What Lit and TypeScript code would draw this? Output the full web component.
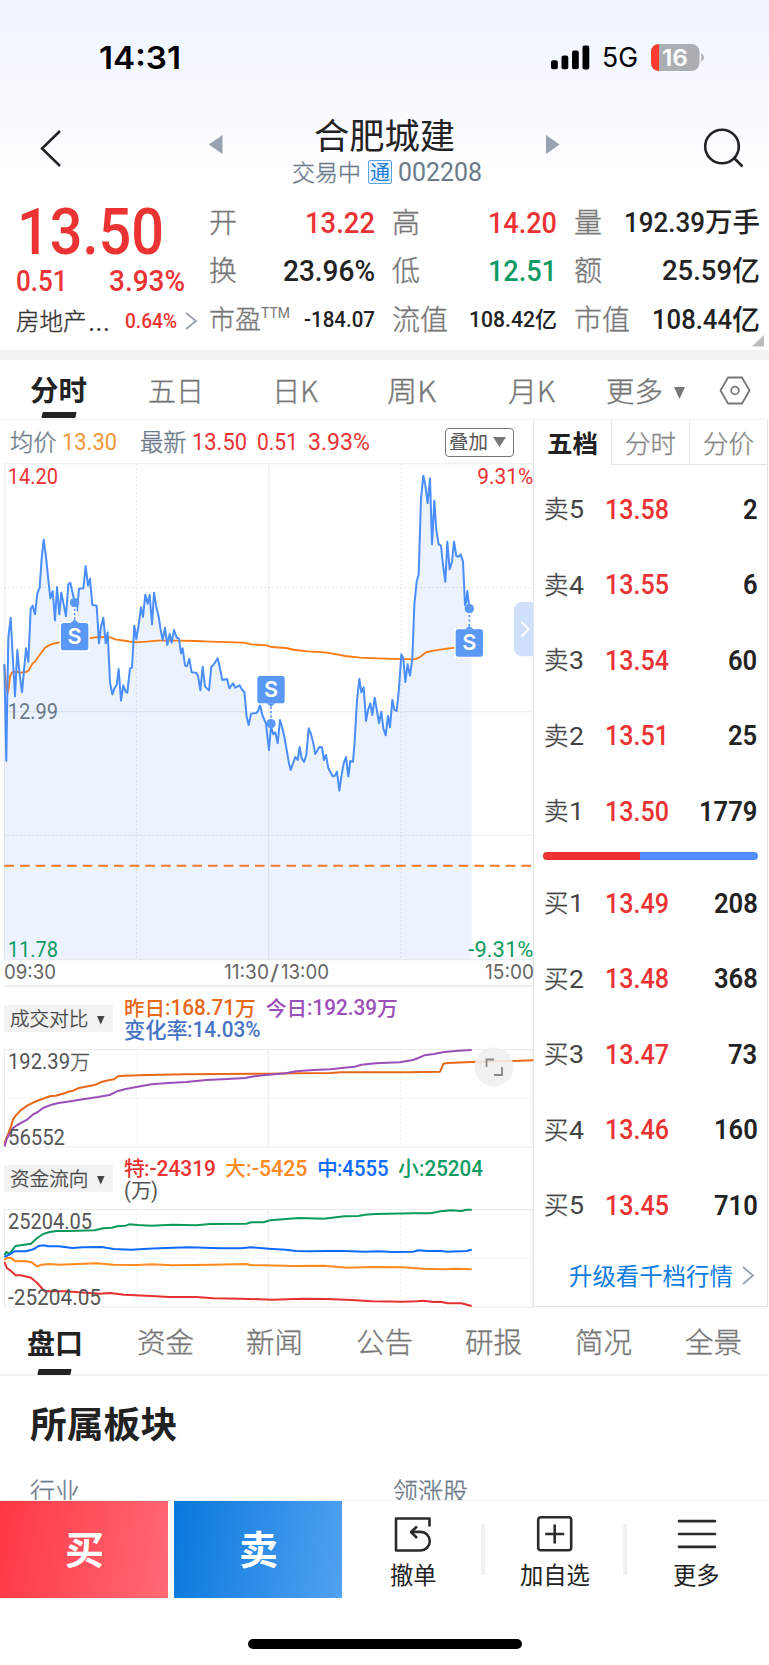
import { LitElement, html, svg, css } from "lit";
import { customElement } from "lit/decorators.js";

const ADV: Record<string, number> = { ".": 0.263, ":": 0.255, "%": 0.72, "-": 0.4, "(": 0.34, ")": 0.34 };
const HAN = /[\u4e00-\u9fff]/;

/** One run of text fitted to an exact width, centred vertically on its glyphs. */
function t(s: string, fs: number, w?: number, cls = "") {
  const han = HAN.test(s);
  const width =
    w ?? (han ? s.length * fs : [...s].reduce((a, c) => a + (ADV[c] ?? 0.5617) * fs * 0.9, 0));
  const y = fs / 2 + (han ? 0.38 : 0.3555) * fs;
  return html`<svg class="t ${cls}" width=${width.toFixed(1)} height=${fs}>
    <text x="0" y=${y} font-size=${fs} class=${han ? "han" : "num"} textLength=${width.toFixed(1)} lengthAdjust="spacingAndGlyphs">${s}</text>
  </svg>`;
}

const arrowRight = (w: number, h: number, cls = "chev") =>
  html`<svg class=${cls} width=${w} height=${h} viewBox="0 0 ${w} ${h}"><path d="M1 1L${w - 1} ${h / 2}L1 ${h - 1}" fill="none" stroke="#9aa5b1" stroke-width="1.9"/></svg>`;

const PRICE =
  "13,628 19,917 22,715 25,548 32,488 38,600 45,724 52,585 58,650 66,712 78,580 85,620 92,462 98,452 105,478 112,415 119,398 125,310 131,254 138,305 145,375 151,430 158,408 165,496 171,396 178,478 184,413 198,484 205,388 211,383 217,410 224,440 227,455 231,468 237,401 250,400 257,333 264,392 270,371 277,450 290,452 297,565 303,515 310,488 317,565 323,532 330,682 337,718 343,700 350,690 356,642 363,737 370,691 377,710 382,713 390,640 396,638 403,512 409,552 416,510 423,457 429,486 436,419 443,446 449,420 456,508 462,413 469,455 476,485 482,525 488,555 495,518 502,570 509,537 515,563 522,525 530,548 537,551 543,595 548,580 555,632 561,634 568,611 575,652 588,653 594,662 601,706 608,635 615,694 627,706 634,635 640,630 653,610 660,640 667,675 681,672 688,700 699,685 706,698 719,691 726,704 733,710 740,785 746,810 753,776 769,774 774,768 780,750 787,780 798,806 800,825 807,885 813,815 820,838 826,832 833,865 840,795 846,815 853,845 860,885 867,925 872,945 879,925 886,906 893,915 899,876 905,910 912,921 919,900 926,820 932,835 939,860 946,897 958,876 966,877 972,915 978,900 985,940 998,964 1005,962 1011,950 1018,1007 1024,965 1031,925 1038,906 1045,964 1051,918 1059,920 1064,860 1071,735 1078,672 1084,712 1091,697 1098,798 1104,765 1111,745 1117,780 1124,728 1131,768 1137,804 1144,770 1150,820 1157,841 1164,782 1170,817 1177,734 1183,764 1190,768 1197,700 1204,598 1210,610 1216,681 1223,628 1230,662 1237,610 1243,450 1250,380 1256,358 1263,130 1270,62 1276,90 1283,145 1290,70 1296,268 1303,137 1309,225 1316,268 1323,272 1329,330 1336,380 1342,260 1349,343 1356,320 1362,260 1369,303 1376,305 1382,298 1389,320 1395,450 1399,440 1402,408 1408,460";
const AVG =
  "13,628 19,700 23,713 26,700 30,665 36,652 48,650 60,653 78,651 86,646 98,625 105,620 115,605 135,578 145,572 160,566 185,561 220,555 260,551 280,548 296,546 332,547 345,553 380,558 402,562 440,560 470,557 530,557 590,558 630,560 730,563 755,568 800,571 815,576 858,579 885,585 925,589 975,592 1015,599 1035,603 1080,608 1150,611 1240,613 1250,611 1260,606 1278,592 1300,587 1340,581 1370,578 1408,576";

const VOL = [
  ["#e8681a", "13,295 20,275 33,240 38,222 46,210 60,195 80,180 100,170 130,158 148,152 162,151 190,143 198,139 212,136 230,128 245,125 270,120 282,116 297,109 318,104 332,102 342,93 360,91 430,89 540,87 780,85 850,84 960,83 990,81 1190,81 1278,79 1288,55 1300,53 1370,50 1390,49 1490,47 1549,45"],
  ["#9b4fb8", "13,303 20,280 36,250 50,239 80,222 95,208 110,200 125,188 150,178 170,173 210,167 240,162 285,155 318,149 340,138 365,131 400,124 440,117 490,113 540,110 600,104 660,101 712,98 730,94 780,88 830,84 860,78 910,74 960,72 1000,67 1030,64 1050,58 1090,54 1160,51 1200,44 1215,38 1232,30 1260,26 1290,20 1330,16 1370,14"],
];
const FUND = [
  ["#0b9a5b", "13,630 18,620 28,625 45,602 60,600 90,595 108,578 125,566 145,560 165,557 200,557 275,555 300,549 325,547 340,543 365,541 375,537 400,539 440,541 500,538 570,540 610,536 715,535 730,531 765,531 785,525 840,520 870,518 940,520 1000,513 1040,512 1060,508 1090,506 1200,504 1250,504 1280,498 1310,495 1340,497 1355,493 1370,493"],
  ["#0f6bff", "13,635 30,626 42,618 75,618 97,612 110,603 125,600 140,603 170,603 210,608 240,606 295,605 330,611 380,613 430,610 480,608 550,606 640,609 700,609 730,606 780,610 830,613 860,617 900,618 950,617 1000,617 1060,619 1100,618 1140,620 1200,619 1215,615 1240,617 1280,617 1300,619 1355,617 1370,613"],
  ["#ff8a1f", "13,645 20,638 30,637 45,648 70,647 92,651 108,663 120,658 145,656 170,658 210,657 280,654 330,658 400,659 440,657 500,660 620,658 715,656 730,660 770,660 850,662 940,661 1010,667 1080,665 1170,666 1230,670 1290,672 1320,670 1370,672"],
  ["#e83030", "13,650 20,668 30,675 45,690 60,690 90,697 108,713 130,738 190,738 250,742 290,745 320,743 360,748 440,752 490,755 570,755 620,759 700,760 790,763 880,760 950,761 1020,764 1080,768 1170,769 1210,768 1230,766 1260,770 1280,769 1300,774 1340,774 1370,782"],
];

function marker(x: number, y: number, dotY: number) {
  const down = dotY > y;
  const e = down ? y + 41 : y - 41;
  const tip = down ? e + 10 : e - 10;
  return svg`
    <line x1=${x} x2=${x} y1=${tip} y2=${dotY} stroke="#fff" stroke-width="12"/>
    <line x1=${x} x2=${x} y1=${tip} y2=${dotY} stroke="#5a98f6" stroke-width="5" stroke-dasharray="7 6"/>
    <circle cx=${x} cy=${dotY} r="14" fill="#5a98f6"/>
    <path d="M${x - 41} ${y - 41}h82v82h-82z" fill="#5a98f6" stroke="#fff" stroke-width="8" stroke-linejoin="round"/>
    <path d="M${x - 12} ${e}L${x} ${tip}L${x + 12} ${e}z" fill="#5a98f6" stroke="#5a98f6"/>
    <rect x=${x - 41} y=${y - 41} width="82" height="82" rx="8" fill="#5a98f6"/>
    <text x=${x} y=${y + 21} text-anchor="middle" font-size="65" class="badge">S</text>`;
}

function miniChart(lines: string[][], top: number, height: number) {
  return html`<svg class="lines" width="533" height=${height} viewBox="0 ${top} 1548 ${height * 3}" preserveAspectRatio="none">
    <g stroke="#ebebeb" stroke-width="1" fill="none">
      <rect vector-effect="non-scaling-stroke" x="13" y=${top + 2} width="1535" height="292"/>
      <path vector-effect="non-scaling-stroke" d="M779 ${top + 2}V${top + 294}"/>
      <path vector-effect="non-scaling-stroke" stroke-dasharray="2 2" d="M396 ${top + 2}V${top + 294}M1164 ${top + 2}V${top + 294}M13 ${top + 148}H1548"/>
    </g>
    ${lines.map(([c, p]) => svg`<polyline vector-effect="non-scaling-stroke" points=${p} fill="none" stroke=${c} stroke-width="2" stroke-linejoin="round"/>`)}
  </svg>`;
}

@customElement("app-root")
export class AppRoot extends LitElement {
  static styles = css`
    :host { display: flex; flex-direction: column; position: relative; width: 769px; height: 1665px; overflow: hidden;
      background: #fff linear-gradient(#eff4ff, #fff 190px) no-repeat; background-size: 100% 190px;
      font-family: "Noto Sans CJK SC", "Noto Sans", sans-serif; color: #222; box-sizing: border-box; }
    * { box-sizing: border-box; }
    svg { display: block; flex: none; overflow: visible; }
    text { fill: currentColor; }
    .num { font-family: Roboto, "Liberation Sans", sans-serif; }
    .han { font-family: "Noto Sans CJK SC", sans-serif; }
    .light .han { font-weight: 300; stroke: currentColor; stroke-width: 0.35px; }
    .m text { font-weight: 500; }
    .b text { font-weight: 700; }
    .ios text { font-family: Inter, "Liberation Sans", sans-serif; }
    .sb text { font-weight: 600; }
    .badge { font-family: Inter, "Liberation Sans", sans-serif; font-weight: 600; fill: #fff; }
    .row { display: flex; align-items: center; }
    .red { color: #eb3333; } .green { color: #0f9b63; } .gray { color: #777; } .slate { color: #6b7a8a; }
    .dark { color: #222; } .mid { color: #555; } .amber { color: #f0983a; }

    .status { height: 115px; padding-left: 99px; flex: none; }
    .bars { margin-left: 370px; }
    .g5 { margin-left: 12px; color: #000; }
    .battery { margin-left: 13px; margin-bottom: 1px; }
    .clock { color: #000; }

    .nav { height: 75px; flex: none; display: grid; grid-template-columns: 208px 15px 322px 15px 209px; }
    .back { padding: 14px 0 0 40px; }
    .tri { padding-top: 20px; }
    .find { padding: 13px 0 0 144px; }
    .title { display: flex; flex-direction: column; align-items: center; padding-top: 3px; gap: 7px; }
    .sub { height: 24px; padding-left: 5px; }
    .tag { width: 24px; height: 24px; border: 1px solid #5ea5e6; border-radius: 2px; margin: 0 6px 0 7px; background: #eaf4ff; color: #1f7fd6; display: grid; place-items: center; }

    .quote { position: relative; height: 160px; flex: none; display: flex; padding: 8px 0 0 16px; }
    .last { width: 193px; }
    .big { height: 65px; padding-left: 1px; }
    .chg { height: 34px; width: 169px; justify-content: space-between; }
    .ind { height: 48px; }
    .ind .red { margin-left: 15px; }
    .ind .chev { margin-left: 8px; }
    .dots { margin-left: 1px; color: #333; }
    .ink { color: #333; }
    .stats { display: grid; grid-template-columns: 166px 165px 186px; column-gap: 17px; grid-auto-rows: 48.3px; height: 145px; }
    .stat { display: flex; align-items: center; justify-content: space-between; }
    .stats .gray { margin-left: -0.5px; }
    .ttm { display: flex; align-items: flex-start; }
    .corner { position: absolute; left: 752px; top: 145px; }

    .gap { height: 10px; background: #f2f2f2; flex: none; }
    .tabs { height: 60px; flex: none; padding-left: 30px; display: grid; grid-template-columns: 118px 124px 115px 121px 98px 113px auto; align-items: center; border-bottom: 1px solid #eee; padding-top: 2px; }
    .tab { position: relative; color: #777; }
    .tab.on { color: #222; }
    .bar { position: absolute; left: 12px; top: 36px; width: 34px; height: 6px; background: #222; border-radius: 1px; transform: skewX(-12deg); }

    .main { height: 887px; flex: none; display: flex; }
    .left { width: 533px; flex: none; }
    .info { height: 43px; padding: 1px 0 0 10px; }
    .g1 { margin-left: 5.5px; } .g2 { margin-left: 23px; } .g3 { margin-left: 10px; }
    .overlay { margin-left: 75px; width: 69px; height: 29px; border: 1.5px solid #777; border-radius: 4px; padding-left: 3px; gap: 5px; color: #555; }
    .axis { height: 27px; border-bottom: 2px solid #efefef; margin-left: 4px; display: grid; grid-template-columns: 219.5px 46.5px 10.5px 204px auto; align-items: center; color: #666; padding-bottom: 1px; }
    .head { height: 62px; padding-left: 4px; display: flex; align-items: flex-start; }
    .chip { width: 109px; height: 27px; margin-top: 18px; background: #f2f2f2; padding: 1px 0 0 6px; gap: 9px; color: #444; }
    .chip .c, .c { padding-top: 2px; }
    .legend { margin: 10px 0 0 10.5px; }
    .legend .row { height: 22px; }
    .orange { color: #e8681a; } .purple { color: #9b4fb8; } .steel { color: #4674c4; } .org { color: #ff8a1f; } .blue { color: #0f6bff; }
    .s1 { margin-left: 11px; } .s2 { margin-left: 9px; }
    .dn { margin: 4px 0 0 11px; }
    .mini { position: relative; height: 98px; color: #555; }
    .hi { position: absolute; left: 7.5px; top: 2px; }
    .lo { position: absolute; left: 7.5px; bottom: -1px; }
    .expand { position: absolute; left: 474px; top: -2px; }

    .right { width: 235px; border: 1px solid #e4e4e4; border-top: 0; flex: none; }
    .ptabs { display: grid; grid-template-columns: 77px 78px 78px; height: 44.5px; }
    .pt { display: grid; place-items: center; color: #888; border-left: 1px solid #e4e4e4; border-bottom: 1px solid #e4e4e4; padding: 4px 1px 0 0; }
    .pt.on { border-color: transparent; color: #222; }
    .side { padding: 6px 9.5px 0 10px; }
    .lower { padding-top: 0; }
    .lvl { height: 75.6px; display: grid; grid-template-columns: 60.5px 80px 1fr; align-items: center; }
    .name { display: flex; align-items: center; color: #444; }
    .qty { justify-self: end; }
    .ratio { display: grid; grid-template-columns: 97px 118px; height: 8px; margin: 4px 0 4px 9px; border-radius: 4px; overflow: hidden; width: 215px; }
    .sell { background: #eb3333; } .buy { background: #4f8dff; }
    .more { height: 64px; padding: 2px 0 0 34.5px; gap: 10px; color: #0b7be0; }

    .btabs { height: 69px; flex: none; padding: 4px 0 0 27px; display: grid; grid-template-columns: repeat(7, 109.6px); align-items: center; border-bottom: 2px solid #f2f2f2; }
    .btabs .bar { left: 11px; top: 40px; width: 33px; }
    .sector { height: 124px; flex: none; overflow: hidden; padding: 30px 0 0 30px; }
    .heads { display: grid; grid-template-columns: 363px auto; margin-top: 36px; }

    .actions { height: 98px; flex: none; display: flex; border-top: 1px solid #f0f0f0; }
    .btn { width: 168px; height: 97px; display: grid; place-items: center; color: #fff; padding-left: 1px; }
    .b-buy { background: linear-gradient(100deg, #ff3744, #ff6a75); margin-right: 6px; }
    .b-sell { background: linear-gradient(100deg, #0877dd, #51a2f1); padding-left: 0; }
    .act { display: flex; flex-direction: column; align-items: center; padding-top: 14px; gap: 11px; }
    .sep { width: 4px; height: 51px; margin-top: 23px; background: #f1f1f1; }
    .a1 { width: 139px; padding-left: 3px; } .a2 { width: 137.5px; padding-left: 3px; } .a3 { width: 140px; }
    .home { width: 274px; height: 10px; border-radius: 5px; background: #000; margin: 41px 0 0 247.5px; }
  `;

  private stat(label: unknown, value: unknown) {
    return html`<div class="stat">${label}<div class="row">${value}</div></div>`;
  }

  private level(n: string, i: string, price: string, qty: string) {
    return html`<div class="lvl">
      <div class="name">${t(n, 24.5, undefined, "light")}${t(i, 26.5, 15)}</div>
      ${t(price, 27.5, 64, "m red")}
      ${t(qty, 27.5, qty.length * 14.6, "sb dark qty")}
    </div>`;
  }

  render() {
    const caret = (w: number, h: number, c = "#777") =>
      html`<svg width=${w} height=${h} viewBox="0 0 ${w} ${h}"><path d="M0 0H${w}L${w / 2} ${h}z" fill=${c}/></svg>`;
    return html`
      <div class="status row">
        ${t("14:31", 31.5, 82, "ios sb clock")}
        <svg class="bars" width="39" height="25" viewBox="0 0 39 25"><rect y="15.3" width="6.8" height="9" rx="2"/><rect x="10.5" y="10.6" width="6.8" height="13.7" rx="2"/><rect x="21" y="5.6" width="6.8" height="18.7" rx="2"/><rect x="31.5" y="0.4" width="6.8" height="24" rx="2"/></svg>
        ${t("5G", 27, 36, "ios g5")}
        <svg class="battery" width="53" height="27" viewBox="0 0 53 27">
          <rect width="48.5" height="27" rx="8" fill="#abaeb3"/><path d="M8 0a8 8 0 0 0-8 8v11a8 8 0 0 0 8 8z" fill="#ff3b30"/>
          <path d="M50.3 9q2.6 1.8 2.6 4.5t-2.6 4.5z" fill="#abaeb3"/>
          <text x="24" y="21.8" font-size="22.5" text-anchor="middle" class="badge" textLength="26" lengthAdjust="spacingAndGlyphs">16</text>
        </svg>
      </div>
      <div class="nav">
        <div class="back"><svg width="22" height="38" viewBox="0 0 22 38"><path d="M20 2L2 19.5L20 37" fill="none" stroke="#222" stroke-width="2.5"/></svg></div>
        <div class="tri"><svg width="15" height="19"><path d="M14.5 0V19L.8 9.5z" fill="#98a3af"/></svg></div>
        <div class="title">
          ${t("合肥城建", 35, 141)}
          <div class="sub row slate">${t("交易中", 23, undefined, "light")}<span class="tag">${t("通", 20)}</span>${t("002208", 26, 84)}</div>
        </div>
        <div class="tri"><svg width="15" height="19"><path d="M1 0V19L14.5 9.5z" fill="#98a3af"/></svg></div>
        <div class="find"><svg width="42" height="42" viewBox="0 0 42 42"><g fill="none" stroke="#222" stroke-width="2.6"><circle cx="18" cy="18.5" r="16.8"/><path d="M30.5 30.5L38.5 38.5"/></g></svg></div>
      </div>

      <div class="quote">
        <div class="last">
          <div class="big row">${t("13.50", 64, 147, "m red")}</div>
          <div class="chg row">${t("0.51", 29, 51.5, "m red")}${t("3.93%", 29, 76, "m red")}</div>
          <div class="ind row ink">${t("房地产", 23.5, undefined, "light")}${t("...", 27, 22, "dots")}${t("0.64%", 20, 52, "m red")}${arrowRight(12, 18)}</div>
        </div>
        <div class="stats">
          ${this.stat(t("开", 28, undefined, "gray light"), t("13.22", 29, 70, "m red"))}
          ${this.stat(t("高", 28, undefined, "gray light"), t("14.20", 29, 69, "m red"))}
          ${this.stat(t("量", 28, undefined, "gray light"), html`${t("192.39", 28, 81, "m dark")}${t("万手", 27.5, 55, "m dark")}`)}
          ${this.stat(t("换", 28, undefined, "gray light"), t("23.96%", 29, 92, "m dark"))}
          ${this.stat(t("低", 28, undefined, "gray light"), t("12.51", 29, 69, "m green"))}
          ${this.stat(t("额", 28, undefined, "gray light"), html`${t("25.59", 28, 70, "m dark")}${t("亿", 28, 28, "m dark")}`)}
          ${this.stat(html`<div class="ttm gray">${t("市盈", 26, undefined, "light")}${t("TTM", 14.5, 29)}</div>`, t("-184.07", 22, 71, "m dark"))}
          ${this.stat(t("流值", 28, undefined, "gray light"), html`${t("108.42", 22, 66, "m dark")}${t("亿", 22, 22, "m dark")}`)}
          ${this.stat(t("市值", 28, undefined, "gray light"), html`${t("108.44", 28, 80, "m dark")}${t("亿", 28, 28, "m dark")}`)}
        </div>
        <svg class="corner" width="12" height="12"><path d="M12 0V11.5H0z" fill="#bbb"/></svg>
      </div>
      <div class="gap"></div>

      <div class="tabs">
        <div class="tab on">${t("分时", 28.5, undefined, "b")}<i class="bar"></i></div>
        <div class="tab">${t("五日", 28, 56, "light")}</div>
        <div class="tab">${t("日K", 28, 46, "light")}</div>
        <div class="tab">${t("周K", 28, 49, "light")}</div>
        <div class="tab">${t("月K", 28, 47, "light")}</div>
        <div class="tab row">${t("更多", 28, 57, "light")}<span class="dn">${caret(11, 12)}</span></div>
        <svg width="32" height="29" viewBox="0 0 32 29"><g fill="none" stroke="#777" stroke-width="1.8"><path d="M9 1.5H23L30.5 14.5L23 27.5H9L1.5 14.5z" stroke-linejoin="round"/><circle cx="16" cy="14.5" r="3.8"/></g></svg>
      </div>

      <div class="main">
        <div class="left">
          <div class="info row">
            ${t("均价", 23.3, undefined, "light slate")}<span class="g1">${t("13.30", 23.5, 55, "amber")}</span>
            <span class="g2">${t("最新", 23.3, undefined, "light slate")}</span>
            <span class="g1">${t("13.50", 23.5, 55, "red")}</span><span class="g3">${t("0.51", 23.5, 41, "red")}</span><span class="g3">${t("3.93%", 23.5, 62, "red")}</span>
            <div class="overlay row">${t("叠加", 19.5)}${caret(13, 10)}</div>
          </div>
          <svg width="533" height="497" viewBox="0 24 1599 1491">
            <polygon points="13,1513 ${PRICE} 1415,470 1415,1513" fill="#ecf3fe"/>
            <g fill="none" stroke="#000" stroke-opacity=".08" stroke-width="3">
              <rect x="13" y="26" width="1587" height="1488"/>
              <path d="M806 26V1513M13 770H1600"/>
              <path stroke-dasharray="6 6" stroke-opacity=".11" d="M409 26V1513M1203 26V1513M13 398H1600M13 1141H1600"/>
            </g>
            <path d="M13 1232H1600" stroke="#f07a2b" stroke-width="6" stroke-dasharray="29 18"/>
            <polyline points=${AVG} fill="none" stroke="#fa7a14" stroke-width="5.5"/>
            <polyline points=${PRICE} fill="none" stroke="#4a8efc" stroke-width="6" stroke-linejoin="round"/>
            ${marker(224, 545, 443)}${marker(813, 704, 806)}${marker(1408, 564, 461)}
            <path d="M1602 441H1566a24 24 0 0 0-24 24V580a24 24 0 0 0 24 24H1602z" fill="#cfe0fb"/>
            <path d="M1564 501L1586 522L1564 545" fill="none" stroke="#fff" stroke-width="6"/>
            <g font-size="65">
              <text x="23" y="88" textLength="151" lengthAdjust="spacingAndGlyphs" class="num red">14.20</text>
              <text x="23" y="793" textLength="151" lengthAdjust="spacingAndGlyphs" class="num slate">12.99</text>
              <text x="23" y="1506" textLength="151" lengthAdjust="spacingAndGlyphs" class="num green">11.78</text>
              <text x="1432" y="88" textLength="168" lengthAdjust="spacingAndGlyphs" class="num red">9.31%</text>
              <text x="1405" y="1506" textLength="195" lengthAdjust="spacingAndGlyphs" class="num green">-9.31%</text>
            </g>
          </svg>
          <div class="axis">${t("09:30", 20, 52, "ios")}${t("11:30", 20, 45, "ios")}${t("/", 21, 9, "ios")}${t("13:00", 20, 48, "ios")}${t("15:00", 20, 49, "ios")}</div>
          <div class="head">
            <div class="chip row">${t("成交对比", 19.6, undefined, "light")}<span class="c">${caret(7.5, 8.5, "#444")}</span></div>
            <div class="legend">
              <div class="row"><span class="row orange">${t("昨日", 20.8, 41, "m")}${t(":168.71", 21.5, 70, "m")}${t("万", 20.8, 20.8, "m")}</span><span class="row purple s1">${t("今日", 20.8, 41, "m")}${t(":192.39", 21.5, 70, "m")}${t("万", 20.8, 20.8, "m")}</span></div>
              <div class="row steel">${t("变化率", 21.3, undefined, "m")}${t(":14.03%", 21.5, 73.5, "m")}</div>
            </div>
          </div>
          <div class="mini">
            ${miniChart(VOL, 11, 98)}
            <div class="hi row">${t("192.39", 21.5, 62)}${t("万", 20, 20, "light")}</div>
            <div class="lo">${t("56552", 21.5, 57)}</div>
            <svg class="expand" width="40" height="40" viewBox="0 0 40 40"><circle cx="20" cy="20" r="19.5" fill="#efefef" fill-opacity=".88"/><path d="M12.5 20V12.5H20M20 28H28V20" fill="none" stroke="#888" stroke-width="1.8"/></svg>
          </div>
          <div class="head fund">
            <div class="chip row">${t("资金流向", 19.6, undefined, "light")}<span class="c">${caret(7.5, 8.5, "#444")}</span></div>
            <div class="legend">
              <div class="row"><span class="row red">${t("特", 20.8, 20.8, "m")}${t(":-24319", 21.8, 72, "m")}</span><span class="row org s2">${t("大", 20.8, 20.8, "m")}${t(":-5425", 21.8, 61.5, "m")}</span><span class="row blue s2">${t("中", 20.8, 20.8, "m")}${t(":4555", 21.8, 51.5, "m")}</span><span class="row green s2">${t("小", 20.8, 20.8, "m")}${t(":25204", 21.8, 64, "m")}</span></div>
              <div class="row mid">${t("(", 22, 7)}${t("万", 20.8)}${t(")", 22, 7)}</div>
            </div>
          </div>
          <div class="mini">
            ${miniChart(FUND, 491, 98)}
            <div class="hi">${t("25204.05", 21.5, 84)}</div>
            <div class="lo">${t("-25204.05", 21.5, 93)}</div>
          </div>
        </div>

        <div class="right">
          <div class="ptabs"><div class="pt on">${t("五档", 25.5, undefined, "b")}</div><div class="pt">${t("分时", 25.5, undefined, "light")}</div><div class="pt">${t("分价", 25.5, undefined, "light")}</div></div>
          <div class="side">
            ${this.level("卖", "5", "13.58", "2")}${this.level("卖", "4", "13.55", "6")}${this.level("卖", "3", "13.54", "60")}${this.level("卖", "2", "13.51", "25")}${this.level("卖", "1", "13.50", "1779")}
          </div>
          <div class="ratio"><i class="sell"></i><i class="buy"></i></div>
          <div class="side lower">
            ${this.level("买", "1", "13.49", "208")}${this.level("买", "2", "13.48", "368")}${this.level("买", "3", "13.47", "73")}${this.level("买", "4", "13.46", "160")}${this.level("买", "5", "13.45", "710")}
          </div>
          <div class="more row">${t("升级看千档行情", 23.4)}${arrowRight(12, 19)}</div>
        </div>
      </div>

      <div class="btabs">
        <div class="tab on">${t("盘口", 28, undefined, "b")}<i class="bar"></i></div>
        ${["资金", "新闻", "公告", "研报", "简况", "全景"].map((s) => html`<div class="tab">${t(s, 28.5, undefined, "light")}</div>`)}
      </div>
      <div class="sector">
        ${t("所属板块", 36.8, undefined, "b")}
        <div class="heads slate">${t("行业", 25, undefined, "light")}${t("领涨股", 25, undefined, "light")}</div>
      </div>

      <div class="actions">
        <div class="btn b-buy">${t("买", 39, undefined, "b")}</div>
        <div class="btn b-sell">${t("卖", 39, undefined, "b")}</div>
        <div class="act a1">
          <svg width="38" height="37" viewBox="0 0 38 37"><g fill="none" stroke="#2b2b2b" stroke-width="2.6" stroke-linejoin="round"><path d="M35.5 11.5V3.5H2V35.5H26.5a9.3 9.3 0 0 0 0-18.6H17"/><path d="M23 11.5L17 17L23 23"/></g></svg>
          ${t("撤单", 23.3)}
        </div>
        <i class="sep"></i>
        <div class="act a2">
          <svg width="38" height="37" viewBox="0 0 38 37"><g fill="none" stroke="#2b2b2b" stroke-width="2.6"><rect x="2.2" y="2.3" width="33" height="33" rx="2.5"/><path d="M18.7 9.5V28.5M9.2 19H28.2"/></g></svg>
          ${t("加自选", 23.3)}
        </div>
        <i class="sep"></i>
        <div class="act a3">
          <svg width="38" height="37" viewBox="0 0 38 37"><path d="M1 6.2H37M1 19H37M1 31.8H37" stroke="#2b2b2b" stroke-width="2.7" stroke-linecap="round"/></svg>
          ${t("更多", 23.3)}
        </div>
      </div>
      <div class="home"></div>
    `;
  }
}
